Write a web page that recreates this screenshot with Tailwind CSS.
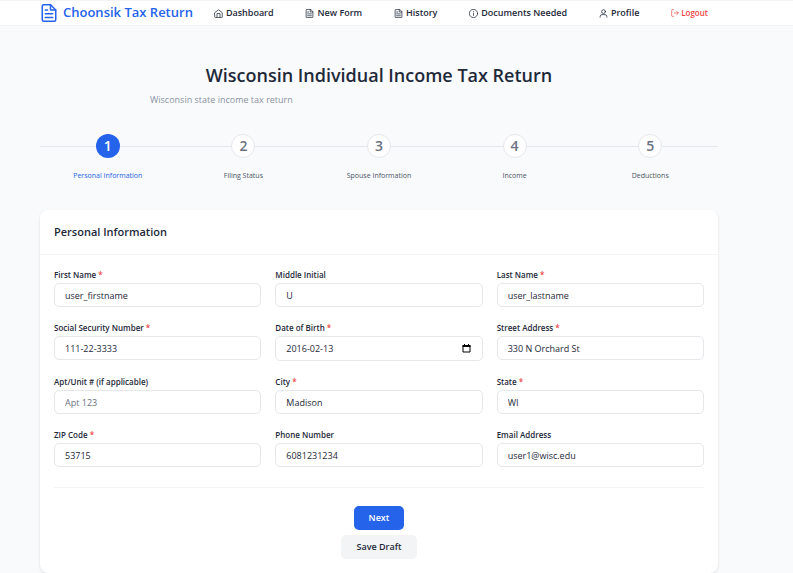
<!DOCTYPE html>
<html lang="en">

<head>
    <meta charset="UTF-8">
    <meta name="viewport" content="width=device-width, initial-scale=1.0">
    <title>Choonsik Tax Return - Wisconsin Individual Income Tax Return</title>
    <script src="https://cdn.jsdelivr.net/npm/@tailwindcss/browser@4"></script>
</head>

<body class="min-h-screen bg-gray-50 font-['Open_Sans','Noto_Sans',sans-serif] text-gray-800">
    <header class="border-y border-gray-100 bg-white pl-10 pr-[75px]">
        <div class="flex h-6 items-center gap-[21px]">
            <a href="#" class="flex shrink-0 items-center gap-[5px] whitespace-nowrap text-[13px] font-semibold text-[#2563eb]">
                <svg class="size-[18px]" viewBox="0 0 24 24" fill="none" stroke="currentColor" stroke-width="2" stroke-linecap="round" stroke-linejoin="round"><path d="M14 1H5a2 2 0 0 0-2 2v18a2 2 0 0 0 2 2h14a2 2 0 0 0 2-2V8z"/><path d="M14 1v7h7"/><path d="M17 13H7M17 18H7M10 8H7"/></svg>
                Choonsik Tax Return
            </a>
            <nav class="flex flex-1 items-center justify-between whitespace-nowrap pr-[10px] text-[9px] font-semibold">
                <a href="#" class="flex items-center gap-[3px] hover:text-[#2563eb]">
                    <svg class="size-[9px]" viewBox="0 0 24 24" fill="none" stroke="currentColor" stroke-width="2" stroke-linecap="round" stroke-linejoin="round"><path d="M2 10l10-8 10 8v11a2 2 0 0 1-2 2H4a2 2 0 0 1-2-2z"/><path d="M8 23V12h8v11"/></svg>
                    Dashboard
                </a>
                <a href="#" class="flex items-center gap-[3px] hover:text-[#2563eb]">
                    <svg class="size-[9px]" viewBox="0 0 24 24" fill="none" stroke="currentColor" stroke-width="2" stroke-linecap="round" stroke-linejoin="round"><path d="M14 1H5a2 2 0 0 0-2 2v18a2 2 0 0 0 2 2h14a2 2 0 0 0 2-2V8z"/><path d="M14 1v7h7"/><path d="M17 13H7M17 18H7M10 8H7"/></svg>
                    New Form
                </a>
                <a href="#" class="flex items-center gap-[3px] hover:text-[#2563eb]">
                    <svg class="size-[9px]" viewBox="0 0 24 24" fill="none" stroke="currentColor" stroke-width="2" stroke-linecap="round" stroke-linejoin="round"><path d="M14 1H5a2 2 0 0 0-2 2v18a2 2 0 0 0 2 2h14a2 2 0 0 0 2-2V8z"/><path d="M14 1v7h7"/><path d="M17 13H7M17 18H7M10 8H7"/></svg>
                    History
                </a>
                <a href="#" class="flex items-center gap-[3px] hover:text-[#2563eb]">
                    <svg class="size-[9px]" viewBox="0 0 24 24" fill="none" stroke="currentColor" stroke-width="2" stroke-linecap="round" stroke-linejoin="round"><circle cx="12" cy="12" r="11"/><path d="M12 17v-6M12 7v.1"/></svg>
                    Documents Needed
                </a>
                <a href="#" class="flex items-center gap-[3px] hover:text-[#2563eb]">
                    <svg class="size-[9px]" viewBox="0 0 24 24" fill="none" stroke="currentColor" stroke-width="2" stroke-linecap="round" stroke-linejoin="round"><circle cx="12" cy="7" r="5"/><path d="M3 22v-2a5 5 0 0 1 5-5h8a5 5 0 0 1 5 5v2"/></svg>
                    Profile
                </a>
                <button type="button" class="flex items-center gap-[2px] text-[8px] font-semibold text-[#ef4444]">
                    <svg class="size-2" viewBox="0 0 24 24" fill="none" stroke="currentColor" stroke-width="2" stroke-linecap="round" stroke-linejoin="round"><path d="M8 22H4a2 2 0 0 1-2-2V4a2 2 0 0 1 2-2h4"/><path d="M17 17l5-5-5-5M22 12H10"/></svg>
                    Logout
                </button>
            </nav>
        </div>
    </header>

    <main class="pl-10 pr-[75px] pt-[35px]">
        <h1 class="text-center text-[18px] leading-7 font-semibold">Wisconsin Individual Income Tax Return</h1>
        <p class="mx-auto mt-[3px] max-w-[458px] text-[9px] leading-4 text-[#8b93a5]">Wisconsin state income tax return</p>

        <ol class="mt-[26px] grid grid-cols-5 text-center text-[7px] leading-3 text-gray-600">
            <li>
                <div class="flex items-center">
                    <span class="h-px flex-1 bg-gray-200"></span>
                    <span class="flex size-6 items-center justify-center rounded-full bg-[#2563eb] text-[14px] font-semibold text-white">1</span>
                    <span class="h-px flex-1 bg-gray-200"></span>
                </div>
                <p class="mt-3 text-[#2563eb]">Personal Information</p>
            </li>
            <li>
                <div class="flex items-center">
                    <span class="h-px flex-1 bg-gray-200"></span>
                    <span class="flex size-6 items-center justify-center rounded-full border border-gray-200 bg-white text-[14px] font-semibold text-gray-500">2</span>
                    <span class="h-px flex-1 bg-gray-200"></span>
                </div>
                <p class="mt-3">Filing Status</p>
            </li>
            <li>
                <div class="flex items-center">
                    <span class="h-px flex-1 bg-gray-200"></span>
                    <span class="flex size-6 items-center justify-center rounded-full border border-gray-200 bg-white text-[14px] font-semibold text-gray-500">3</span>
                    <span class="h-px flex-1 bg-gray-200"></span>
                </div>
                <p class="mt-3">Spouse Information</p>
            </li>
            <li>
                <div class="flex items-center">
                    <span class="h-px flex-1 bg-gray-200"></span>
                    <span class="flex size-6 items-center justify-center rounded-full border border-gray-200 bg-white text-[14px] font-semibold text-gray-500">4</span>
                    <span class="h-px flex-1 bg-gray-200"></span>
                </div>
                <p class="mt-3">Income</p>
            </li>
            <li>
                <div class="flex items-center">
                    <span class="h-px flex-1 bg-gray-200"></span>
                    <span class="flex size-6 items-center justify-center rounded-full border border-gray-200 bg-white text-[14px] font-semibold text-gray-500">5</span>
                    <span class="h-px flex-1 bg-gray-200"></span>
                </div>
                <p class="mt-3">Deductions</p>
            </li>
        </ol>

        <form class="mt-7 rounded-lg bg-white shadow-sm">
            <h2 class="border-b border-gray-100 px-[14px] py-3 text-[11px] leading-5 font-semibold">Personal Information</h2>
            <div class="p-[14px]">
                <div class="grid grid-cols-3 gap-x-[14px] gap-y-[15px] text-[8px] leading-3 font-semibold">
                    <div>
                        <label for="firstName" class="mb-[2px] block">First Name <span class="text-[#ef4444]">*</span></label>
                        <input id="firstName" type="text" value="user_firstname" class="h-6 w-full rounded-[5px] border border-gray-200 px-[10px] text-[9px] font-normal">
                    </div>
                    <div>
                        <label for="middleInitial" class="mb-[2px] block">Middle Initial</label>
                        <input id="middleInitial" type="text" value="U" class="h-6 w-full rounded-[5px] border border-gray-200 px-[10px] text-[9px] font-normal">
                    </div>
                    <div>
                        <label for="lastName" class="mb-[2px] block">Last Name <span class="text-[#ef4444]">*</span></label>
                        <input id="lastName" type="text" value="user_lastname" class="h-6 w-full rounded-[5px] border border-gray-200 px-[10px] text-[9px] font-normal">
                    </div>
                    <div>
                        <label for="ssn" class="mb-[2px] block">Social Security Number <span class="text-[#ef4444]">*</span></label>
                        <input id="ssn" type="text" value="111-22-3333" class="h-6 w-full rounded-[5px] border border-gray-200 px-[10px] text-[9px] font-normal">
                    </div>
                    <div>
                        <label for="birthDate" class="mb-[2px] block">Date of Birth <span class="text-[#ef4444]">*</span></label>
                        <div class="flex h-[25px] items-center rounded-[5px] border border-gray-200 pl-[10px] pr-[11px]">
                            <input id="birthDate" type="text" value="2016-02-13" class="min-w-0 flex-1 text-[9px] font-normal outline-none">
                            <button type="button" aria-label="Open calendar" class="text-black">
                                <svg class="size-[9px]" viewBox="0 0 18 18" fill="none" stroke="currentColor" stroke-width="2"><path d="M2 3h14v13H2z"/><path d="M1 4h16" stroke-width="4"/><path d="M5 0v3M13 0v3"/></svg>
                            </button>
                        </div>
                    </div>
                    <div>
                        <label for="street" class="mb-[2px] block">Street Address <span class="text-[#ef4444]">*</span></label>
                        <input id="street" type="text" value="330 N Orchard St" class="h-6 w-full rounded-[5px] border border-gray-200 px-[10px] text-[9px] font-normal">
                    </div>
                    <div>
                        <label for="apt" class="mb-[2px] block">Apt/Unit # (if applicable)</label>
                        <input id="apt" type="text" placeholder="Apt 123" class="h-6 w-full rounded-[5px] border border-gray-200 px-[10px] text-[9px] font-normal placeholder:text-gray-500">
                    </div>
                    <div>
                        <label for="city" class="mb-[2px] block">City <span class="text-[#ef4444]">*</span></label>
                        <input id="city" type="text" value="Madison" class="h-6 w-full rounded-[5px] border border-gray-200 px-[10px] text-[9px] font-normal">
                    </div>
                    <div>
                        <label for="state" class="mb-[2px] block">State <span class="text-[#ef4444]">*</span></label>
                        <input id="state" type="text" value="WI" class="h-6 w-full rounded-[5px] border border-gray-200 px-[10px] text-[9px] font-normal">
                    </div>
                    <div>
                        <label for="zip" class="mb-[2px] block">ZIP Code <span class="text-[#ef4444]">*</span></label>
                        <input id="zip" type="text" value="53715" class="h-6 w-full rounded-[5px] border border-gray-200 px-[10px] text-[9px] font-normal">
                    </div>
                    <div>
                        <label for="phone" class="mb-[2px] block">Phone Number</label>
                        <input id="phone" type="tel" value="6081231234" class="h-6 w-full rounded-[5px] border border-gray-200 px-[10px] text-[9px] font-normal">
                    </div>
                    <div>
                        <label for="email" class="mb-[2px] block">Email Address</label>
                        <input id="email" type="email" value="user1@wisc.edu" class="h-6 w-full rounded-[5px] border border-gray-200 px-[10px] text-[9px] font-normal">
                    </div>
                </div>
                <div class="mt-5 flex flex-col items-center gap-[5px] border-t border-gray-100 pt-[18px] text-[9px] font-semibold">
                    <button type="button" class="h-6 rounded-[5px] bg-[#2563eb] px-[15px] text-white hover:bg-[#1d4ed8]">Next</button>
                    <button type="button" class="h-6 rounded-[5px] bg-gray-100 px-[15px] hover:bg-gray-200">Save Draft</button>
                </div>
            </div>
        </form>
    </main>
</body>

</html>
